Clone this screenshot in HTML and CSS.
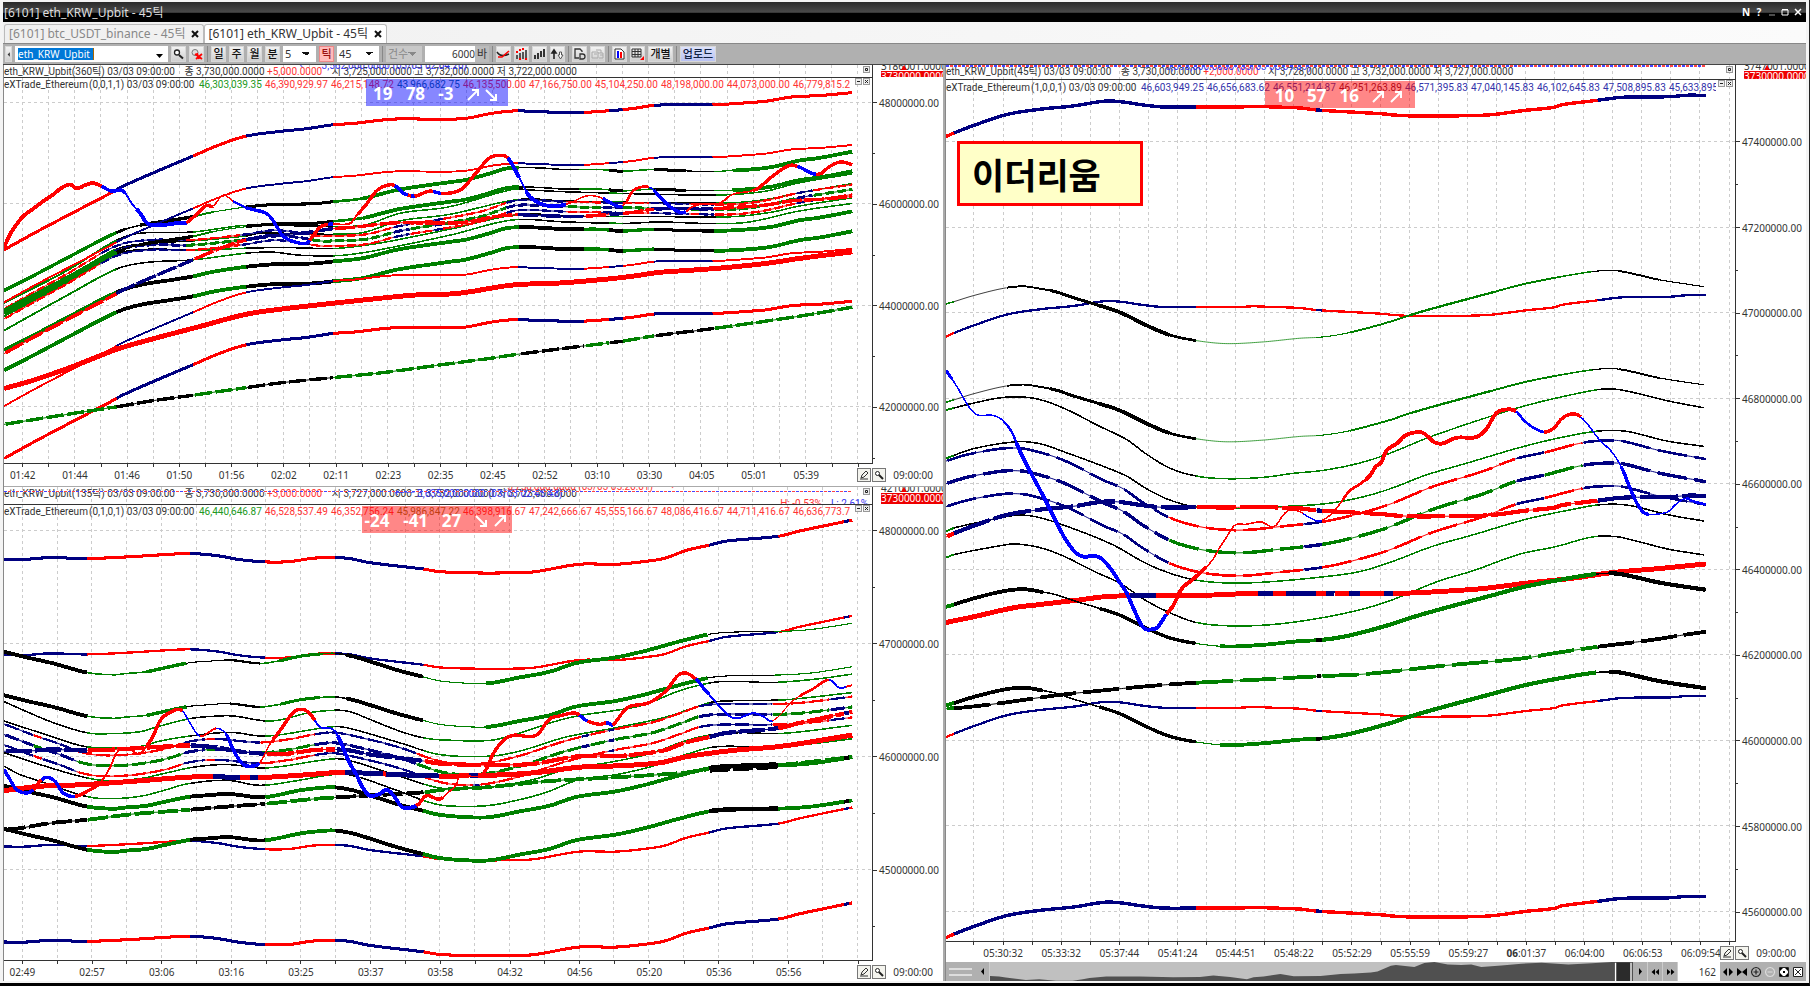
FILE: index.html
```html
<!DOCTYPE html>
<html lang="ko">
<head>
<meta charset="utf-8">
<title>[6101] eth_KRW_Upbit - 45틱</title>
<link rel="stylesheet" href="styles.css">
</head>
<body>
<div class="window">
  <header class="titlebar">
    <h1 class="title">[6101] eth_KRW_Upbit - 45틱</h1>
    <div class="window-buttons">
      <button type="button" aria-label="새 창">N</button>
      <button type="button" aria-label="도움말">?</button>
      <button type="button" aria-label="최소화"><svg viewBox="0 0 8 8"><path d="M1 7h6" stroke="#999"/></svg></button>
      <button type="button" aria-label="최대화"><svg viewBox="0 0 8 8"><path d="M1 2h6v5H1z M1 1.500h6" stroke="#fff" fill="none"/></svg></button>
      <button type="button" aria-label="닫기"><svg viewBox="0 0 8 8"><path d="M1 1l6 6M7 1l-6 6" stroke="#fff" stroke-width="1.500"/></svg></button>
    </div>
  </header>

  <nav class="tabs">
    <div class="tab"><a href="#btc">[6101] btc_USDT_binance - 45틱</a><button type="button" aria-label="탭 닫기"><svg viewBox="0 0 8 8"><path d="M1 1l6 6M7 1l-6 6"/></svg></button></div>
    <div class="tab tab-active"><a href="#eth">[6101] eth_KRW_Upbit - 45틱</a><button type="button" aria-label="탭 닫기"><svg viewBox="0 0 8 8"><path d="M1 1l6 6M7 1l-6 6"/></svg></button></div>
  </nav>

  <div class="toolbar">
    <button type="button" class="tool tool-slim" aria-label="접기"><svg viewBox="0 0 8 15"><path d="M5.500 5v5L3 7.500z" fill="#333"/></svg></button>
    <div class="symbol">
      <input class="symbol-input" type="text" value="eth_KRW_Upbit" aria-label="종목">
      <button type="button" class="symbol-drop" aria-label="종목 목록"><svg viewBox="0 0 7 4"><path d="M0 0h7L3.500 4z"/></svg></button>
    </div>
    <button type="button" class="tool" aria-label="검색"><svg viewBox="0 0 15 15"><circle cx="6" cy="5.500" r="2.500" fill="#fff" stroke="#222" stroke-width="1.300"/><path d="M8 8l4 3.500" stroke="#222" stroke-width="2"/></svg></button>
    <button type="button" class="tool" aria-label="검색 해제"><svg viewBox="0 0 15 15"><circle cx="6" cy="5.500" r="3" fill="#ddd" stroke="#777"/><path d="M6 7l7 5M13 7l-6 5M8 6l2 6" stroke="#f00" stroke-width="1.800"/></svg></button>
    <span class="divider"></span>
    <button type="button" class="tool">일</button>
    <button type="button" class="tool">주</button>
    <button type="button" class="tool">월</button>
    <button type="button" class="tool">분</button>
    <select class="combo combo-min" aria-label="분 단위"><option>5</option></select>
    <button type="button" class="tool tool-on">틱</button>
    <select class="combo combo-tick" aria-label="틱 단위"><option>45</option></select>
    <span class="divider"></span>
    <select class="combo combo-off" aria-label="건수" disabled><option>건수</option></select>
    <label class="bars"><input type="text" value="6000"><span>바</span></label>
    <span class="divider"></span>
    <button type="button" class="tool" aria-label="추세선"><svg viewBox="0 0 15 15"><path d="M1 5q4 6 12 2" stroke="#222" stroke-width="1.500" fill="none"/><path d="M2 10h4l7-6" stroke="#f00" stroke-width="1.600" fill="none"/></svg></button>
    <button type="button" class="tool" aria-label="신호"><svg viewBox="0 0 15 15"><path d="M3 8v4M6 6v6M9 5v7M12 3v9" stroke="#333" stroke-width="1.600"/><path d="M2 5h2M5 3h2M8 2h2M11 12h2M5 12h2" stroke="#f00" stroke-width="2"/></svg></button>
    <button type="button" class="tool" aria-label="봉"><svg viewBox="0 0 15 15"><path d="M3 8v4M6 6v6M9 4v6M12 2v8" stroke="#333" stroke-width="2"/></svg></button>
    <button type="button" class="tool" aria-label="위아래"><svg viewBox="0 0 15 15"><path d="M4 12V4M2 6l2-3 2 3z" stroke="#222" stroke-width="1.600" fill="#222"/><path d="M9.500 5h2v3h1.500l-2.500 4L8 8h1.500z" stroke="#555" fill="#fff"/></svg></button>
    <span class="divider"></span>
    <button type="button" class="tool" aria-label="문서"><svg viewBox="0 0 15 15"><path d="M7 11H3V2h5l2 2v1M8 12V7h2.500q2.500 0 2.500 2.500T10.500 12z" stroke="#333" stroke-width="1.300" fill="none"/></svg></button>
    <button type="button" class="tool" aria-label="복사" disabled><svg viewBox="0 0 15 15"><path d="M2 5h6v6H2zM6 3h5v3M8 6h5v5H9M4 7h3M10 8h3" stroke="#aaa" fill="none"/></svg></button>
    <span class="divider"></span>
    <button type="button" class="tool" aria-label="차트 보고서"><svg viewBox="0 0 15 15"><path d="M3 2h6l3 3v7H3z" stroke="#333" fill="#fff"/><path d="M6 4v7" stroke="#00f" stroke-width="2"/><path d="M9 5v6" stroke="#f00" stroke-width="2"/></svg></button>
    <button type="button" class="tool" aria-label="표"><svg viewBox="0 0 15 15"><path d="M2 2h9v8H2zM2 4.500h9M2 7.500h9M5 2v8M8 2v8" stroke="#333" fill="none"/><path d="M14 9v4h-4z" fill="#f00"/></svg></button>
    <button type="button" class="tool tool-text">개별</button>
    <span class="divider"></span>
    <button type="button" class="tool tool-text tool-upload">업로드</button>
  </div>

  <main class="workspace">
    <div class="column column-left">
      <section class="chart chart-360" data-chart="tick360">
        <div class="quote">
          <svg class="grid"></svg>
          <p>eth_KRW_Upbit(360틱) 03/03 09:00:00 <span class="q-close">종 3,730,000.0000</span> <span class="red">+5,000.0000</span> <span class="q-open">시 3,725,000.0000</span> 고 3,732,000.0000 저 3,722,000.0000</p>
          <span class="extreme extreme-low">←─ 3,562,000.0000 (03/03 02:04:20)</span>
          <button type="button" class="mini" aria-label="창 크기"><svg viewBox="0 0 7 7"><path d="M2.500 2.500h2v2h-2z"/></svg></button>
        </div>
        <div class="quote-scale"><span>3186001.0000</span><i></i><b>3730000.0000</b></div>
        <div class="plot">
          <svg class="grid"></svg><svg class="lines"></svg>
          <div class="legend"><span class="legend-name">eXTrade_Ethereum</span><span class="legend-arg">(0,0,1,1) 03/03 09:00:00</span><span class="green">46,303,039.35</span><span class="red">46,390,929.97</span><span class="red">46,215,148.72</span><span class="teal">43,966,682.75</span><span class="red">46,135,500.00</span><span class="red">47,166,750.00</span><span class="red">45,104,250.00</span><span class="red">48,198,000.00</span><span class="red">44,073,000.00</span><span class="red">46,779,815.2</span></div>
          <div class="pane-buttons"><button type="button" class="mini" aria-label="접기"><svg viewBox="0 0 7 7"><path d="M2 3.500h3"/></svg></button><button type="button" class="mini" aria-label="닫기"><svg viewBox="0 0 7 7"><path d="M2 2l3 3M5 2L2 5"/></svg></button></div>
          <div class="badge badge-blue"><span>19</span><span>78</span><span>-3</span><svg viewBox="0 0 13 13"><path d="M1 12L11 2M5 2h6v6"/></svg><svg viewBox="0 0 13 13"><path d="M1 2l10 10M11 6v6H5"/></svg></div>
        </div>
        <div class="scale"><svg></svg></div>
        <div class="times"><svg></svg><div class="times-tools"><button type="button" class="mini-tool" aria-label="그리기"><svg viewBox="0 0 12 12"><path d="M3 9l1-3 4-4 2 2-4 4zM2 10h8" stroke="#333" fill="none"/></svg></button><button type="button" class="mini-tool" aria-label="확대"><svg viewBox="0 0 12 12"><circle cx="4.500" cy="4.500" r="2" stroke="#222" fill="#fff"/><path d="M6 6l4 4" stroke="#222" stroke-width="2"/></svg></button><span>09:00:00</span></div></div>
      </section>

      <section class="chart chart-135" data-chart="tick135">
        <div class="quote">
          <svg class="grid"></svg>
          <p>eth_KRW_Upbit(135틱) 03/03 09:00:00 <span class="q-close">종 3,730,000.0000</span> <span class="red">+3,000.0000</span> <span class="q-open">시 3,727,000.0000</span> 고 3,732,000.0000 저 3,723,000.0000</p>
          <span class="extreme extreme-low">←─ 3,635,000.0000 (03/03 02:43:48)</span>
          <span class="extreme extreme-high red">3,750,000.0000 (03/03 05:26:01) ─→</span>
          <span class="extreme extreme-pct"><span class="red">H: -0.53%</span> <span>L: 2.61%</span></span>
          <span class="last-line"></span>
          <button type="button" class="mini" aria-label="창 크기"><svg viewBox="0 0 7 7"><path d="M2.500 2.500h2v2h-2z"/></svg></button>
        </div>
        <div class="quote-scale"><span>4210001.0000</span><i></i><b>3730000.0000</b></div>
        <div class="plot">
          <svg class="grid"></svg><svg class="lines"></svg>
          <div class="legend"><span class="legend-name">eXTrade_Ethereum</span><span class="legend-arg">(0,1,0,1) 03/03 09:00:00</span><span class="green">46,440,646.87</span><span class="red">46,528,537.49</span><span class="red">46,352,756.24</span><span class="olive">45,986,847.22</span><span class="red">46,398,916.67</span><span class="red">47,242,666.67</span><span class="red">45,555,166.67</span><span class="red">48,086,416.67</span><span class="red">44,711,416.67</span><span class="red">46,636,773.7</span></div>
          <div class="pane-buttons"><button type="button" class="mini" aria-label="접기"><svg viewBox="0 0 7 7"><path d="M2 3.500h3"/></svg></button><button type="button" class="mini" aria-label="닫기"><svg viewBox="0 0 7 7"><path d="M2 2l3 3M5 2L2 5"/></svg></button></div>
          <div class="badge badge-red"><span>-24</span><span>-41</span><span>27</span><svg viewBox="0 0 13 13"><path d="M1 2l10 10M11 6v6H5"/></svg><svg viewBox="0 0 13 13"><path d="M1 12L11 2M5 2h6v6"/></svg></div>
        </div>
        <div class="scale"><svg></svg></div>
        <div class="times"><svg></svg><div class="times-tools"><button type="button" class="mini-tool" aria-label="그리기"><svg viewBox="0 0 12 12"><path d="M3 9l1-3 4-4 2 2-4 4zM2 10h8" stroke="#333" fill="none"/></svg></button><button type="button" class="mini-tool" aria-label="확대"><svg viewBox="0 0 12 12"><circle cx="4.500" cy="4.500" r="2" stroke="#222" fill="#fff"/><path d="M6 6l4 4" stroke="#222" stroke-width="2"/></svg></button><span>09:00:00</span></div></div>
      </section>
    </div>

    <div class="column column-right">
      <section class="chart chart-45" data-chart="tick45">
        <div class="quote">
          <svg class="grid"></svg>
          <p>eth_KRW_Upbit(45틱) 03/03 09:00:00 <span class="q-close">종 3,730,000.0000</span> <span class="red">+2,000.0000</span> <span class="q-open">시 3,728,000.0000</span> 고 3,732,000.0000 저 3,727,000.0000</p>
          <span class="extreme extreme-low">←─ 3,696,000.0000 (03/03 05:39:09)</span>
          <span class="last-line"></span>
          <button type="button" class="mini" aria-label="창 크기"><svg viewBox="0 0 7 7"><path d="M2.500 2.500h2v2h-2z"/></svg></button>
        </div>
        <div class="quote-scale"><span>3747001.0000</span><i></i><b>3730000.0000</b></div>
        <div class="plot">
          <svg class="grid"></svg><svg class="lines"></svg>
          <div class="legend"><span class="legend-name">eXTrade_Ethereum</span><span class="legend-arg">(1,0,0,1) 03/03 09:00:00</span><span class="navy">46,603,949.25</span><span class="navy">46,656,683.62</span><span class="navy">46,551,214.87</span><span class="dark">46,251,263.89</span><span class="navy">46,571,395.83</span><span class="navy">47,040,145.83</span><span class="navy">46,102,645.83</span><span class="navy">47,508,895.83</span><span class="navy">45,633,895</span></div>
          <div class="pane-buttons"><button type="button" class="mini" aria-label="접기"><svg viewBox="0 0 7 7"><path d="M2 3.500h3"/></svg></button><button type="button" class="mini" aria-label="닫기"><svg viewBox="0 0 7 7"><path d="M2 2l3 3M5 2L2 5"/></svg></button></div>
          <div class="badge badge-red"><span>10</span><span>57</span><span>16</span><svg viewBox="0 0 13 13"><path d="M1 12L11 2M5 2h6v6"/></svg><svg viewBox="0 0 13 13"><path d="M1 12L11 2M5 2h6v6"/></svg></div>
          <div class="note">이더리움</div>
        </div>
        <div class="scale"><svg></svg></div>
        <div class="times"><svg></svg><div class="times-tools"><button type="button" class="mini-tool" aria-label="그리기"><svg viewBox="0 0 12 12"><path d="M3 9l1-3 4-4 2 2-4 4zM2 10h8" stroke="#333" fill="none"/></svg></button><button type="button" class="mini-tool" aria-label="확대"><svg viewBox="0 0 12 12"><circle cx="4.500" cy="4.500" r="2" stroke="#222" fill="#fff"/><path d="M6 6l4 4" stroke="#222" stroke-width="2"/></svg></button><span>09:00:00</span></div></div>
      </section>

      <div class="navigator">
        <div class="nav-grip"><span></span></div>
        <button type="button" class="nav-button" aria-label="왼쪽"><svg viewBox="0 0 15 15"><path d="M9 4v7L6 7.500z"/></svg></button>
        <svg class="overview" viewBox="153 247 1920 56" preserveAspectRatio="none">
          <path fill="#505050" d="M153 303V288l27 2 20 3 30 3 30 4 40-2 50 4h50l30-4 20-4 50-4h100l100 2 80-1 40-4 50 4 50 7 20-6 30-2 50-8 40 7 80-1 60-6 40-1 50-3 20-3 40-17 15-2 55 6 30-12 30-3 40 7 40 2 30-2 30 8 60-5 60-5 60-3 80 5 70-3 60-4h63v56z"/>
          <path fill="#2b2b2b" d="M2020 249h48v54h-48z"/><path d="M2021 249v54M2067 249v54" stroke="#fff" stroke-width="4"/>
        </svg>
        <button type="button" class="nav-button" aria-label="오른쪽"><svg viewBox="0 0 15 15"><path d="M6 4v7l3-3.500z"/></svg></button>
        <button type="button" class="nav-button" aria-label="빠르게 왼쪽"><svg viewBox="0 0 15 15"><path d="M7 5v6L3.500 8zM11 5v6L7.500 8z"/></svg></button>
        <button type="button" class="nav-button" aria-label="빠르게 오른쪽"><svg viewBox="0 0 15 15"><path d="M4 5v6l3.500-3zM8 5v6l3.500-3z"/></svg></button>
        <input class="nav-count" type="text" value="162" aria-label="봉 개수">
        <div class="nav-icons">
          <button type="button" aria-label="넓게"><svg viewBox="0 0 12 12"><path d="M5 2v8L1 6zM7 2v8l4-4z"/></svg></button>
          <button type="button" aria-label="좁게"><svg viewBox="0 0 12 12"><path d="M1 2v8l5-4zM11 2v8L6 6z"/></svg></button>
          <button type="button" aria-label="확대"><svg viewBox="0 0 12 12"><path d="M6 1.500a4.500 4.500 0 1 0 .1 0zM6 3.500v5M3.500 6h5" fill="none" stroke="#222" stroke-width="1.200"/></svg></button>
          <button type="button" aria-label="축소"><svg viewBox="0 0 12 12"><path d="M6 1.500a4.500 4.500 0 1 0 .1 0zM3.500 6h5" fill="none" stroke="#ddd" stroke-width="1.200"/></svg></button>
          <button type="button" aria-label="전체"><svg viewBox="0 0 12 12"><path fill="#fff" stroke="#222" d="M1.500 1.500h9v9h-9z"/><path d="M2 2h3L2 5zM10 2v3L7 2zM2 10V7l3 3zM10 10H7l3-3zM5 5h2v2H5z"/></svg></button>
          <button type="button" aria-label="닫기"><svg viewBox="0 0 12 12"><path fill="#fff" stroke="#222" d="M1.500 1.500h9v9h-9zM3 3l6 6M9 3L3 9"/></svg></button>
        </div>
      </div>
    </div>
  </main>
</div>
<script src="charts.js"></script>
</body>
</html>
```
FILE: styles.css
```css
* { box-sizing: border-box; }
body {
  margin: 0;
  background: #f4f4f4;
  color: #333;
  font-family: "Noto Sans", "Noto Sans CJK KR", sans-serif;
  font-size: 10px;
}
button, input, select { font: inherit; color: inherit; margin: 0; padding: 0; border: 0; border-radius: 0; }
p, h1 { margin: 0; font-weight: 400; }
.window {
  height: 100vh;
  min-height: 600px;
  display: flex;
  flex-direction: column;
  padding: 2px 3px 2px 3px;
  border-right: 1px solid #222;
  border-bottom: 3px solid #000;
  overflow: hidden;
}
.red { color: #f33; }
.green { color: #292; }
.teal { color: #168; }
.olive { color: #872; }
.navy { color: #33a; }
.dark { color: #713; }

/* title and tabs */
.titlebar {
  flex: none;
  height: 20px;
  display: flex;
  align-items: center;
  justify-content: space-between;
  background: linear-gradient(#2a2a2a, #4a4a4a 52%, #000 54%);
  color: #ddd;
}
.title { font-size: 12px; padding-left: 1px; }
.window-buttons { display: flex; gap: 5px; padding-right: 4px; }
.window-buttons button { width: 8px; height: 12px; background: none; color: #fff; font-weight: 700; line-height: 12px; }
.window-buttons svg { width: 8px; height: 8px; display: block; }
.tabs {
  flex: none;
  height: 22px;
  display: flex;
  align-items: flex-end;
  padding-left: 1px;
  background: linear-gradient(90deg, #f0f0f0, #fbfbfb);
  border-bottom: 1px solid #888;
}
.tab {
  height: 19px;
  display: flex;
  align-items: center;
  gap: 6px;
  padding: 0 4px;
  border: 1px solid #bbb;
  border-bottom: 0;
  border-radius: 3px 3px 0 0;
  font-size: 12px;
}
.tab a { color: #888; text-decoration: none; line-height: 18px; }
.tab-active { padding-left: 3px; background: #fff; }
.tab-active a { color: #333; }
.tab button { width: 8px; height: 8px; background: none; }
.tab svg { display: block; width: 8px; height: 8px; stroke: #111; stroke-width: 2; }

/* toolbar */
.toolbar {
  flex: none;
  height: 21px;
  display: flex;
  align-items: center;
  gap: 3px;
  padding: 0 2px;
  background: #b0b0b0;
  border-bottom: 1px solid #444;
  font-size: 11px;
}
.tool {
  width: 15px;
  height: 16px;
  flex: none;
  display: flex;
  align-items: center;
  justify-content: center;
  background: linear-gradient(#f2f2f2, #cfcfcf);
  border: 1px solid #d8d8d8;
  line-height: 14px;
  font-weight: 500;
  color: #111;
}
.tool svg { flex: none; width: 15px; height: 15px; }
.tool-slim { width: 7px; }
.tool-slim svg { width: 7px; }
.tool-on { background: #fbb; border-color: #e88; color: #911; }
.tool-text { width: 25px; }
.tool-upload { width: 36px; background: linear-gradient(#dde2fb, #b9c2f2); color: #124; }
.divider { width: 1px; height: 16px; background: #888; }
.symbol { display: flex; align-items: center; justify-content: space-between; width: 153px; height: 16px; padding: 0 5px 0 3px; background: #fff; }
.symbol-input { width: 76px; height: 12px; background: #0078d7; color: #fff; font-size: 10px; line-height: 12px; border-right: 1px solid #a60; }
.symbol-drop { width: 7px; height: 10px; background: none; }
.symbol-drop svg { display: block; width: 7px; height: 4px; margin-top: 3px; }
.combo {
  appearance: none;
  height: 16px;
  padding-left: 2px;
  background: #fff no-repeat right 6px center;
  background-image: conic-gradient(from 315deg at 50% 100%, #111 90deg, transparent 0);
  background-size: 8px 4px;
  line-height: 14px;
  opacity: 1;
}
.combo-min { width: 33px; }
.combo-tick { width: 42px; }
.combo-off { width: 36px; background-color: #c8c8c8; background-image: conic-gradient(from 315deg at 50% 100%, #888 90deg, transparent 0); color: #888; }
.bars { display: flex; align-items: center; }
.bars input { width: 50px; height: 16px; text-align: right; background: #fff; font-size: 10px; }
.bars span { width: 14px; height: 16px; line-height: 15px; text-align: center; background: #bbb; }

/* panels */
.workspace { flex: 1; min-height: 0; display: grid; grid-template-columns: minmax(0, 940fr) minmax(0, 861fr); gap: 2px; background: #aaa; }
.column { display: grid; grid-template-columns: minmax(0, 1fr); min-width: 0; min-height: 0; border-left: 1px solid #888; }
.column-left { grid-template-rows: 421fr 495fr; gap: 1px; }
.column-right { grid-template-rows: minmax(0, 1fr) 19px; }
.chart { display: grid; grid-template-columns: minmax(0, 1fr) 70px; min-height: 0; background: #fff; overflow: hidden; }
.chart-360 { grid-template-rows: 13px minmax(0, 1fr) 22px; }
.chart-135 { grid-template-rows: 18px minmax(0, 1fr) 20px; }
.chart-45 { grid-template-rows: 15px minmax(0, 1fr) 20px; }
.chart svg { display: block; }
.quote { position: relative; overflow: hidden; border-bottom: 1px solid #333; border-right: 1px solid #333; font-family: Roboto, "Noto Sans CJK KR", sans-serif; }
.quote p { position: relative; white-space: nowrap; line-height: 14px; }
.q-close { margin-left: 7px; }
.q-open { margin-left: 7px; }
.quote .mini { position: absolute; right: 2px; top: 1px; }
.extreme { position: absolute; white-space: nowrap; line-height: 14px; color: #33e; }
.extreme.red, .extreme .red { color: #f33; }
.chart-360 .extreme-low { left: 34%; top: -6px; }
.chart-135 .extreme-low { left: 45%; top: 0; }
.chart-135 .extreme-high { left: 58%; top: -7px; }
.chart-135 .extreme-pct { right: 4px; top: 10px; display: flex; gap: 9px; }
.chart-45 .extreme-low { left: 25%; top: -5px; }
.last-line { position: absolute; left: 0; right: 20px; top: 4px; height: 1px; background: repeating-linear-gradient(90deg, #44f 0 3px, #fff 3px 4px, #f44 4px 7px, #fff 7px 8px); }
.chart-45 .last-line { top: 0; height: 2px; right: 30px; }
.quote-scale { position: relative; overflow: hidden; padding-left: 8px; line-height: 14px; }
.quote-scale span { position: absolute; top: -6px; }
.quote-scale i { position: absolute; left: 28px; top: 0; border: 3px solid transparent; border-top: 0; border-bottom: 5px solid #e00; }
.quote-scale b { position: absolute; top: 6px; left: 8px; right: 0; height: 11px; line-height: 11px; overflow: hidden; background: #e00; color: #fff; font-weight: 400; }
.chart-360 .quote-scale b { height: 6px; }
.chart-45 .quote-scale b { height: 8px; }
.plot { position: relative; min-height: 0; overflow: hidden; border-right: 1px solid #333; border-bottom: 1px solid #333; }
.plot > svg, .grid { position: absolute; left: 0; top: 0; width: 100%; height: 100%; }
.grid line { stroke: #ccc; stroke-dasharray: 3 3; shape-rendering: crispEdges; }
.lines path { fill: none; stroke-linejoin: round; shape-rendering: crispEdges; }
.legend { position: relative; display: flex; width: calc(100% - 19px); overflow: hidden; white-space: nowrap; line-height: 14px; font-family: Roboto, sans-serif; }
.chart-45 .legend { line-height: 15px; }
.legend span { flex: 0 0 66px; }
.legend .legend-name { flex-basis: 85px; }
.legend .legend-arg { flex-basis: 110px; }
.pane-buttons { position: absolute; right: 2px; top: 0; display: flex; gap: 1px; }
.mini { width: 7px; height: 7px; background: #eee; outline: 1px solid #999; outline-offset: -1px; }
.mini svg { width: 7px; height: 7px; fill: none; stroke: #222; }
.badge {
  position: absolute;
  top: 1px;
  height: 27px;
  display: flex;
  align-items: center;
  justify-content: space-between;
  padding: 3px 10px 0 7px;
  color: #fff;
  font-size: 17px;
  font-weight: 700;
  line-height: 22px;
}
.badge svg { width: 13px; height: 13px; fill: none; stroke: #fff; stroke-width: 2; }
.badge svg + svg { margin-left: -8px; }
.badge-blue { left: 41.7%; width: 142px; background: rgba(0, 0, 255, .47); }
.badge-red { width: 150px; background: rgba(255, 0, 0, .47); }
.chart-135 .badge { left: 41.2%; padding-left: 3px; padding-right: 5px; }
.chart-45 .badge { left: 40.4%; padding-left: 10px; padding-right: 12px; }
.note {
  position: absolute;
  left: 11px;
  top: 61px;
  width: 186px;
  padding: 5px 12px;
  border: 3px solid #f00;
  background: #ffffc8;
  color: #000;
  font: 700 35px/49px "Noto Sans CJK KR", sans-serif;
}
.scale, .times { position: relative; min-height: 0; }
.scale svg { position: absolute; width: 100%; height: 100%; overflow: visible; }
.scale line, .times line { stroke: #333; shape-rendering: crispEdges; }
.chart text { fill: #333; }
.times { grid-column: 1 / 3; padding-right: 70px; }
.times > svg { width: 100%; height: 100%; overflow: visible; }
.times text { text-anchor: middle; }
.times-tools { position: absolute; right: 10px; top: 4px; display: flex; gap: 3px; align-items: center; line-height: 14px; }
.times-tools span { margin-left: 5px; }
.mini-tool { width: 12px; height: 12px; background: #f4f4ee; outline: 1px solid #777; }
.mini-tool svg { width: 12px; height: 12px; }

/* navigator */
.navigator { display: flex; min-width: 0; background: #c0c0c0; }
.nav-grip { width: 29px; display: flex; align-items: center; justify-content: center; background: #b0b0b0; }
.nav-grip span { width: 23px; height: 8px; border: solid #ddd; border-width: 2px 0; }
.nav-button { flex: none; width: 15px; background: #b0b0b0; border-right: 1px solid #ccc; display: flex; align-items: center; justify-content: center; }
.nav-button svg { flex: none; width: 15px; height: 15px; }
.overview { flex: 1; min-width: 0; height: 100%; display: block; }
.nav-count { width: 42px; padding-right: 4px; text-align: right; background: #fff; }
.nav-icons { display: flex; align-items: center; gap: 2px; padding: 0 2px; background: #b0b0b0; }
.nav-icons button { width: 12px; height: 12px; background: none; }
.nav-icons svg { display: block; width: 12px; height: 12px; }
```
FILE: charts.js
```js
// Series use third-of-a-pixel units inside each chart's own view box.
// pts: "x,y x,y ..."; runs: "<colour><width> <endX>, ..."; shifts: parallel copies.
const COLORS = { r: '#ff0000', n: '#000080', b: '#0000ff', g: '#008000', k: '#000000' };
const WEIGHT = 1.15;

const recolor = (runs, map, width) =>
  runs.replace(/([a-z])(\d+)/g, (m, c, w) => (map[c] || c) + (width || w));

const A1 = '12,512 100,463 200,410 330,342 370,320 460,280 580,229 660,195 740,169 850,154 920,147 1000,135 1060,131 1180,118 1300,118 1395,116 1480,100 1550,93 1600,95 1700,98 1750,98 1850,91 1900,86 1960,77 2000,75 2130,75 2180,73 2250,68 2300,64 2380,51 2460,47 2560,38';
const A1R = 'r8 350,n8 580,r8 740,n8 1000,r8 1555,n8 1755,r8 1830,n8 1870,r8 1965,n8 2140,r8 2560';
const B1 = '12,635 100,590 200,537 350,460 420,438 520,422 580,412 640,398 740,383 830,375 940,373 1000,367 1090,357 1150,342 1200,330 1350,308 1395,302 1460,285 1520,267 1560,264 1620,265 1700,270 1800,270 1870,275 1960,270 2060,274 2150,275 2250,270 2320,262 2400,243 2460,235 2560,216';
const B1R = 'g9 350,k8 375,k4 420,k9 580,g5 640,g3 740,k8 1000,g7 1090,g10 1560,k4 1740,g4 1830,k8 1870,g4 1965,k8 2060,k3 2145,g3 2200,g10 2560';
const B1L = 'g10 350,k10 580,g10 740,k10 1000,g10 1560,k10 1755,g9 1830,k10 1870,g9 1965,k8 2145,g10 2560';
const T1R = 'g5 350,k4 580,g4 740,k4 1000,g4 1560,k4 1830,g4 1870,k4 2150,g4 2560';
const C1 = '12,705 200,600 350,515 450,497 560,498 640,492 740,480 820,468 900,475 960,485 1000,485 1100,480 1200,455 1350,430 1450,410 1540,380 1600,377 1700,382 2000,387 2200,390 2300,378 2400,355 2560,330';
const C1R = 'r6 300,n6 560,r6 720,n6 930,r6 1180,n6 1230,r6 1300,n6 1330,r6 1520,n6 1700,r6 1805,n6 1870,r6 1950,n6 2070,r6 2100,n6 2145,r6 2390,n6 2440,r6 2560';

const A2 = '12,297 80,297 150,292 260,295 400,289 480,284 570,280 650,286 720,298 800,305 870,304 940,294 1000,292 1050,295 1110,307 1270,326 1320,334 1440,338 1500,338 1600,335 1740,312 1850,312 1950,302 2000,293 2060,271 2130,255 2180,243 2340,228 2400,213 2540,184 2560,180';
const A2R = 'n8 262,r8 570,n8 797,r8 1007,n8 1272,r8 2130,n8 2338,r8 2535,n8 2550,r8 2560';
const B2 = '12,573 80,590 160,608 260,635 340,642 380,638 440,633 500,620 570,606 620,602 690,598 780,608 830,602 900,587 960,580 1005,578 1060,587 1120,605 1200,630 1270,648 1320,660 1400,667 1470,667 1560,650 1650,633 1730,607 1850,590 1940,570 2020,548 2110,525 2150,518 2220,514 2320,513 2380,511 2450,505 2560,488';
const B2R = 'k10 262,g4 440,g9 560,k3 690,k6 780,g4 840,g8 960,g4 1007,k4 1040,k10 1270,g3 1460,g10 2125,k3 2325,g3 2560';
const B2L = 'k10 262,g10 570,k10 797,g10 1007,k10 1270,g10 2130,k12 2338,g10 2535,k10 2550,g10 2560';
const T2R = 'k4 262,g4 570,k4 797,g4 1007,k4 1272,g4 2130,k4 2338,g4 2560';
const C2 = '12,820 100,853 180,880 240,903 300,913 400,910 500,893 570,872 650,865 780,875 870,865 950,850 1000,845 1060,855 1200,890 1300,925 1360,938 1450,938 1560,915 1700,870 1850,835 1960,815 2050,785 2100,767 2160,760 2300,760 2400,757 2560,738';
const C2R = 'n6 100,r6 125,n6 230,r6 550,n6 615,r6 645,n6 780,r6 945,n6 1250,r6 1420,n6 1440,r6 1745,n6 1770,r6 1825,n6 1845,r6 2100,n6 2320,r6 2490,n6 2540,r6 2560';

const A3 = '18,-370 40,-380 100,-403 200,-436 300,-452 400,-462 490,-476 540,-475 610,-465 670,-459 770,-459 900,-459 940,-461 1000,-459 1080,-456 1130,-450 1250,-443 1335,-438 1360,-435 1420,-432 1500,-432 1645,-435 1760,-449 1845,-458 1870,-466 1975,-479 2050,-488 2195,-490 2240,-494 2300,-494';
const A3R = 'r9 42,n9 768,r9 1130,n9 1148,r9 1975,n9 2300';
const B3 = '18,133 45,125 100,108 190,86 250,80 300,87 350,97 400,114 470,135 540,158 620,197 690,226 770,243 860,252 970,247 1080,236 1150,232 1230,219 1350,187 1410,167 1500,141 1660,98 1750,74 1860,52 1975,34 2040,34 2160,60 2295,81';
const B3R = 'g4 42,k2 200,k5 330,k8 480,k10 690,k7 768,g2 1130,g3 1230,g5 1410,g6 1660,g5 1860,g4 1960,k3 2040,k5 2160,k3 2295';
const B3L = 'g10 42,k10 310,k4 480,k9 768,g3 840,g10 1130,k10 1148,g11 1970,k4 2010,k11 2300';
const T3R = 'g5 42,k4 768,g4 1975,k4 2295';
const C3 = '18,605 80,586 180,568 230,566 270,571 370,602 490,662 550,688 610,730 690,775 770,800 850,811 920,812 1010,803 1150,787 1250,765 1350,735 1480,682 1630,636 1730,598 1820,578 1930,550 2000,543 2050,545 2160,573 2300,599';
const C3R = 'n7 685,r7 1090,n7 1148,r7 1728,n7 1815,r7 1930,n7 2300';

const CHARTS = {
  tick360: {
    box: [12, -6, 2607, 1159],
    x: { first: 68, step: 78.36, count: 33, labelFrom: 0 },
    y: { first: 68, step: 305.5, values: [48000000, 46000000, 44000000, 42000000] },
    labels: ['01:42', '01:44', '01:46', '01:50', '01:56', '02:02', '02:11', '02:23', '02:35', '02:45', '02:52', '03:10', '03:30', '04:05', '05:01', '05:39'],
    series: [
      { pts: '12,672 200,575 350,483 420,462 580,458 740,438 930,440 1090,438 1200,402 1350,382 1540,330 1600,332 1700,337 2100,347 2200,345 2300,335 2400,310 2560,283', runs: T1R },
      { pts: '12,695 200,598 350,510 450,492 580,485 740,470 780,462 900,463 1000,465 1090,460 1200,425 1350,405 1560,360 1700,365 2000,370 2200,370 2300,360 2400,340 2560,312', runs: T1R },
      { pts: '12,712 200,612 350,525 450,510 580,513 740,507 850,505 1000,508 1060,503 1150,490 1350,450 1560,405 1700,410 2000,412 2200,412 2320,398 2400,380 2560,355', runs: T1R },
      { pts: '12,755 200,650 350,570 440,550 580,542 740,522 820,519 900,528 1000,530 1060,525 1150,510 1350,468 1540,422 1700,428 1880,432 1980,428 2150,433 2250,428 2400,395 2560,372', runs: T1R },
      { pts: C1, runs: C1R, shifts: [-15, 15], dash: '26 10' },
      { pts: C1, runs: recolor(C1R, { r: 'g' }, 8), dash: '26 10' },
      { pts: '12,702 200,600 345,517', runs: 'g14 345' },
      { pts: B1, runs: B1R, shifts: [0, 59] },
      { pts: B1, runs: B1L, shifts: [180, 240] },
      { pts: A1, runs: A1R, shifts: [0, 629] },
      { pts: A1, runs: recolor(A1R, {}, 5), shifts: [158, 471] },
      { pts: A1, runs: recolor(A1R, {}, 9), shifts: [313], dash: '60 8' },
      { pts: '12,930 100,905 220,863 350,812 460,780 600,743 740,706 850,690 1000,673 1160,656 1250,648 1350,645 1400,640 1540,618 1680,612 1780,604 1880,594 1980,580 2050,575 2150,568 2300,553 2400,538 2560,518', runs: 'r13 2560' },
      { pts: '12,1038 200,1008 350,985 450,968 580,950 740,927 850,912 1000,897 1150,882 1350,855 1450,842 1560,826 1750,802 1870,787 1960,772 2150,748 2400,712 2560,685', runs: 'g9 350,k9 580,g9 740,k9 1000,g9 1560,k9 1755,g9 1830,k9 1870,g9 1965,k9 2145,g9 2560', dash: '52 10' },
      { pts: '12,505 30,465 50,435 70,410 100,388 130,365 160,345 185,325 212,315 230,327 260,315 282,311 305,320 335,335 365,332 375,340 400,378 420,400 440,430 460,437 500,436 540,430 560,430 590,405 620,378 640,380 670,347 700,365 740,385 790,398 810,410 830,440 850,470 880,486 920,492 940,470 960,445 985,435 1050,433 1070,410 1100,375 1130,335 1160,318 1185,318 1210,340 1245,350 1290,335 1330,342 1385,330 1430,280 1470,235 1500,228 1525,235 1560,295 1590,350 1640,378 1700,375 1760,350 1800,353 1860,382 1880,370 1900,335 1930,322 1955,325 1980,350 2010,380 2050,400 2080,382 2110,373 2160,372 2200,345 2270,330 2320,290 2370,258 2400,262 2440,282 2465,282 2490,262 2525,247 2560,255', runs: 'r10 305,b9 375,b5 410,b10 560,r9 640,r4 700,b6 740,b9 930,r9 985,b9 1000,r5 1075,r9 1185,b9 1225,r9 1235,b9 1245,r9 1300,b9 1325,r9 1525,b10 1560,b4 1580,b10 1700,r4 1810,b9 1870,r4 1885,r7 1950,b4 1965,b9 2060,r5 2190,r4 2260,r9 2395,b9 2450,r9 2560' }
    ]
  },
  tick135: {
    box: [12, 135, 2607, 1360],
    x: { first: 67, step: 104.5, count: 25, labelFrom: 0 },
    y: { first: 211, step: 337.3, values: [48000000, 47000000, 46000000, 45000000] },
    labels: ['02:49', '02:57', '03:06', '03:16', '03:25', '03:37', '03:58', '04:32', '04:56', '05:20', '05:36', '05:56'],
    series: [
      { pts: '12,722 80,752 160,785 260,815 320,818 420,812 480,795 570,773 640,766 700,765 800,780 850,775 920,757 1000,748 1050,752 1110,775 1200,810 1270,830 1340,837 1470,838 1540,822 1710,770 1870,745 1940,730 2040,690 2140,665 2220,662 2320,665 2450,655 2560,640', runs: T2R },
      { pts: '12,780 120,815 240,853 300,860 420,856 480,840 570,825 690,814 800,825 1000,797 1050,802 1200,845 1320,880 1470,885 1560,870 1700,828 1850,800 2000,768 2100,735 2150,722 2320,718 2380,715 2560,695', runs: T2R },
      { pts: '12,875 120,910 240,945 320,958 420,952 500,935 580,918 680,910 800,920 1000,893 1050,898 1200,945 1320,980 1400,980 1470,978 1600,955 1700,925 1850,900 1960,875 2050,842 2130,822 2220,815 2350,817 2560,793', runs: T2R },
      { pts: '12,915 60,940 120,960 250,1003 320,1012 420,1005 500,985 560,968 680,957 780,972 880,960 1000,940 1060,943 1200,990 1280,1020 1340,1033 1460,1033 1560,1015 1640,993 1740,955 1850,940 1960,915 2060,880 2150,857 2320,858 2420,850 2560,833', runs: T2R },
      { pts: C2, runs: C2R, shifts: [-31, 31], dash: '42 12' },
      { pts: C2, runs: recolor(C2R, { r: 'g' }, 8), dash: '42 12' },
      { pts: A2, runs: A2R, shifts: [0, 1143] },
      { pts: A2, runs: recolor(A2R, {}, 6), shifts: [286, 858] },
      { pts: A2, runs: recolor(A2R, {}, 11), shifts: [573], dash: '80 8' },
      { pts: B2, runs: B2R, shifts: [0, 130] },
      { pts: B2, runs: B2L, shifts: [400, 529] },
      { pts: '12,988 120,975 250,970 400,960 560,948 640,946 750,950 900,942 1020,934 1150,938 1300,944 1440,943 1600,935 1740,918 1850,914 1980,905 2060,887 2200,868 2350,855 2560,822', runs: 'r13 640,n13 720,r13 750,n13 775,r13 1035,n13 1150,r13 1160,n13 1320,r13 1410,n13 1435,r13 2560' },
      { pts: '12,1105 60,1100 150,1085 260,1075 400,1058 570,1045 690,1035 800,1027 950,1012 1100,1003 1270,993 1340,984 1460,978 1640,960 1850,948 2050,935 2130,924 2340,912 2560,888', runs: 'k10 262,g10 570,k10 797,g10 1005,k10 1272,g10 2130,k18 2338,g11 2535,k11 2550,g11 2560', dash: '60 10' },
      { pts: '12,925 30,955 50,985 80,995 100,985 120,960 140,948 165,960 190,995 225,1005 265,988 300,965 330,920 350,875 380,862 420,878 440,855 460,825 480,780 510,755 545,747 570,785 600,825 650,802 680,820 700,865 725,905 745,915 780,905 810,850 840,810 880,755 905,745 930,757 960,797 1000,805 1020,835 1045,895 1070,940 1090,980 1110,1003 1140,998 1160,985 1180,1000 1205,1035 1225,1040 1255,1030 1280,1003 1320,1013 1350,990 1370,970 1380,945 1440,945 1460,925 1480,880 1510,840 1540,823 1610,823 1650,775 1680,765 1730,757 1760,778 1800,790 1825,785 1840,792 1870,755 1890,737 1950,725 2000,690 2035,645 2060,637 2090,655 2120,690 2160,735 2190,765 2215,772 2260,757 2290,765 2315,780 2340,765 2380,720 2440,685 2490,657 2520,680 2560,673', runs: 'b9 100,r9 125,b9 225,r9 300,r5 440,r9 548,b4 600,r5 650,b4 680,b9 780,r4 820,r9 945,b5 1015,b10 1250,r9 1330,r4 1440,r9 1740,b9 1765,r9 1820,b9 1840,r9 2090,b9 2130,b5 2320,r3 2400,r7 2490,b5 2540,r5 2560' }
    ]
  },
  tick45: {
    box: [18, -540, 2370, 2587],
    x: { first: 102, step: 87.23, count: 27, labelFrom: 1 },
    y: { first: -354, step: 256.8, values: [47400000, 47200000, 47000000, 46800000, 46600000, 46400000, 46200000, 46000000, 45800000, 45600000] },
    labels: ['05:30:32', '05:33:32', '05:37:44', '05:41:24', '05:44:51', '05:48:22', '05:52:29', '05:55:59', '05:59:27', '06:01:37', '06:04:00', '06:06:53', '06:09:54'],
    bold: '06:01:37',
    series: [
      { pts: '18,452 100,431 200,413 290,418 380,450 470,496 560,540 620,584 690,626 770,650 860,658 970,654 1060,642 1150,633 1260,611 1350,582 1460,537 1580,495 1750,441 1900,405 2000,388 2060,394 2190,425 2295,445', runs: T3R },
      { pts: '18,597 100,568 230,547 300,553 380,580 470,613 560,650 620,688 690,722 770,743 860,748 970,744 1150,734 1260,715 1350,689 1460,647 1580,612 1750,562 1900,527 2000,513 2070,517 2180,544 2295,561', runs: T3R },
      { pts: C3, runs: C3R, shifts: [0, 137], dash: '90 22' },
      { pts: C3, runs: recolor(C3R, { r: 'g' }, 9), shifts: [68], dash: '90 22' },
      { pts: '18,817 45,805 200,772 240,767 300,775 400,808 520,857 620,913 700,945 770,963 860,971 970,969 1150,953 1260,937 1350,910 1480,861 1600,827 1760,780 1900,750 1975,737 2040,735 2090,742 2190,767 2295,785', runs: T3R },
      { pts: '18,895 45,885 200,856 230,854 300,865 370,890 460,935 540,972 620,1025 700,1065 770,1090 870,1100 1000,1096 1140,1077 1260,1052 1350,1025 1500,965 1600,935 1740,885 1850,862 1960,833 2030,832 2090,845 2190,870 2295,887', runs: T3R },
      { pts: A3, runs: A3R, shifts: [0, 2407] },
      { pts: A3, runs: recolor(A3R, {}, 6), shifts: [601, 1805] },
      { pts: A3, runs: recolor(A3R, {}, 11), shifts: [1203], dash: '115 12' },
      { pts: '18,1090 100,1073 220,1046 300,1036 420,1022 500,1012 570,1010 800,1008 900,1004 1000,1002 1350,1003 1400,1002 1500,997 1630,988 1760,972 1900,957 2020,940 2160,928 2300,914', runs: 'r13 570,n13 650,r13 955,n13 1000,r13 1040,n13 1130,r13 1160,n13 1185,r13 1230,n13 1262,r13 1335,n13 1362,r13 2300' },
      { pts: B3, runs: B3R, shifts: [0, 295] },
      { pts: B3, runs: B3L, shifts: [910, 1206] },
      { pts: '18,1349 75,1345 200,1330 340,1310 470,1296 640,1280 770,1271 950,1262 1130,1252 1260,1246 1350,1238 1500,1221 1740,1199 1860,1180 1975,1163 2120,1145 2230,1128 2300,1118', runs: 'g10 42,k10 770,g10 1130,k10 1145,g10 1975,k10 2300', dash: '110 20' },
      { pts: '18,332 50,380 90,447 115,467 155,467 185,480 215,517 240,575 270,635 310,710 350,790 380,845 410,882 435,893 455,890 480,895 510,925 540,970 560,1000 580,1045 610,1105 640,1110 655,1103 680,1065 700,1040 725,990 760,960 800,923 820,900 840,865 860,835 885,798 920,795 965,788 995,802 1010,797 1030,768 1050,752 1080,757 1110,775 1140,785 1175,765 1200,735 1230,695 1260,675 1290,650 1310,620 1325,610 1340,575 1375,550 1395,530 1420,520 1450,520 1475,540 1485,549 1510,552 1550,535 1610,533 1640,510 1670,462 1700,450 1730,455 1750,478 1775,500 1815,518 1845,505 1865,480 1890,465 1915,466 1940,488 1980,540 2020,580 2050,630 2070,680 2095,735 2120,763 2170,762 2190,755 2210,735 2240,717 2260,725 2300,736', runs: 'b8 35,b4 190,b6 230,b10 680,r10 800,r4 1090,b4 1148,r4 1210,r7 1280,r10 1730,b7 1815,r9 1925,b4 2045,b9 2130,b4 2240,b7 2300' }
    ]
  }
};

const NS = 'http://www.w3.org/2000/svg';
function add(parent, name, attrs, text) {
  const el = document.createElementNS(NS, name);
  for (const key in attrs) el.setAttribute(key, attrs[key]);
  if (text) el.textContent = text;
  parent.appendChild(el);
  return el;
}

// Cubic interpolation between the knots, tangents by finite difference.
function curve(pts) {
  const p = pts.split(' ').map(s => s.split(',').map(Number));
  const slope = i => {
    const a = p[Math.max(0, i - 1)], b = p[Math.min(p.length - 1, i + 1)];
    return (b[1] - a[1]) / (b[0] - a[0]);
  };
  return x => {
    let i = 0;
    while (i < p.length - 2 && x > p[i + 1][0]) i++;
    const h = p[i + 1][0] - p[i][0], t = (x - p[i][0]) / h, u = 1 - t;
    return p[i][1] * u * u * (1 + 2 * t) + slope(i) * h * t * u * u +
      p[i + 1][1] * t * t * (3 - 2 * t) - slope(i + 1) * h * t * t * u;
  };
}

function drawSeries(svg, s) {
  const y = curve(s.pts);
  (s.shifts || [0]).forEach(shift => {
    let x = Number(s.pts.split(',')[0]);
    s.runs.split(',').forEach(run => {
      const [style, endText] = run.split(' ');
      const end = Number(endText);
      let d = '';
      const start = x;
      for (; x < end; x += 6) d += `${d ? 'L' : 'M'}${x} ${(y(x) + shift).toFixed(1)}`;
      x = end;
      d += `L${x} ${(y(x) + shift).toFixed(1)}`;
      const stroke = COLORS[style[0]], width = (Number(style.slice(1)) * WEIGHT).toFixed(1);
      if (s.dash) {
        add(svg, 'path', { d, stroke, 'stroke-width': 3 });
        add(svg, 'path', { d, stroke, 'stroke-width': width, 'stroke-dasharray': s.dash, 'stroke-dashoffset': -(start % 7) });
      } else {
        add(svg, 'path', { d, stroke, 'stroke-width': width });
      }
    });
  });
}

document.querySelectorAll('[data-chart]').forEach(root => {
  const c = CHARTS[root.dataset.chart];
  const [bx, by, bw, bh] = c.box;
  const px = x => `${((x - bx) / bw * 100).toFixed(3)}%`;
  const py = y => `${((y - by) / bh * 100).toFixed(3)}%`;
  const xs = Array.from({ length: c.x.count }, (_, i) => c.x.first + i * c.x.step);

  root.querySelectorAll('.grid').forEach(g => {
    xs.forEach(x => add(g, 'line', { x1: px(x), x2: px(x), y1: 0, y2: '100%' }));
  });
  const grid = root.querySelector('.plot .grid');
  const scale = root.querySelector('.scale svg');
  c.y.values.forEach((value, i) => {
    const y = c.y.first + i * c.y.step;
    add(grid, 'line', { x1: 0, x2: '100%', y1: py(y), y2: py(y) });
    add(scale, 'line', { x1: 0, x2: 4, y1: py(y), y2: py(y) });
    add(scale, 'text', { x: 6, y: py(y), dy: 4 }, value.toFixed(2));
    const half = y + c.y.step / 2;
    if (half < by + bh) add(scale, 'line', { x1: 0, x2: 2, y1: py(half), y2: py(half) });
  });

  const lines = root.querySelector('.lines');
  lines.setAttribute('viewBox', c.box.join(' '));
  lines.setAttribute('preserveAspectRatio', 'none');
  c.series.forEach(s => drawSeries(lines, s));

  const times = root.querySelector('.times > svg');
  xs.forEach(x => add(times, 'line', { x1: px(x), x2: px(x), y1: 0, y2: 3 }));
  c.labels.forEach((label, i) => {
    const t = add(times, 'text', { x: px(xs[c.x.labelFrom + 2 * i]), y: 15 });
    if (label === c.bold) {
      add(t, 'tspan', { 'font-weight': 700 }, label.slice(0, 2));
      add(t, 'tspan', {}, label.slice(2));
    } else {
      t.textContent = label;
    }
  });
});
```
